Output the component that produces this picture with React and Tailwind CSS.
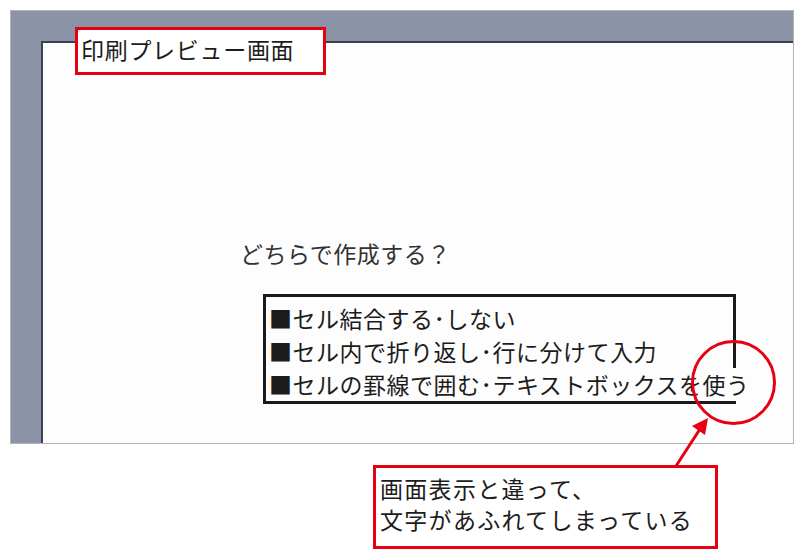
import React from "react";

const JP = { fontFamily: '"Noto Sans CJK JP", "Noto Sans", sans-serif' };

const ROWS = [
  "■セル結合する･しない",
  "■セル内で折り返し･行に分けて入力",
  "■セルの罫線で囲む･テキストボックスを使う",
];

export default function App() {
  return (
    <div style={JP} className="relative w-[800px] h-[556px] bg-white overflow-hidden text-[#1c1c1c]">
      {/* preview frame */}
      <div className="ml-[10px] mt-[10px] w-[784px] h-[434px] bg-[#8b93a7] border border-[#b4b4b4] pt-[30px] pl-[30px]">
        <div className="w-full h-full bg-[#fdfdfd] border-t-2 border-l-2 border-[#3b4150]">
          <div className="pt-[196px] pl-[197px] text-[23px] leading-[28px] tracking-[0.5px] text-[#333]">どちらで作成する？</div>
          <div className="ml-[220px] mt-[27px] w-[473px] h-[110px] border-[3px] border-[#1a1a1a] pt-[5px] pl-[3px]">
            {ROWS.map((r, i) => (
              <div
                key={r}
                className={`text-[23px] leading-[33px] tracking-[0.5px] whitespace-nowrap ${i === 2 ? "relative w-max bg-[#fdfdfd] pr-[2px]" : ""}`}
              >
                {r}
              </div>
            ))}
          </div>
        </div>
      </div>

      {/* callout label, top */}
      <div className="absolute left-[75px] top-[27px] w-[251px] h-[48px] bg-white border-[3px] border-[#e60012] pl-[3px] pt-[4px] text-[23px] leading-[30px] tracking-[0.7px]">
        印刷プレビュー画面
      </div>

      {/* circle on the overflow */}
      <div className="absolute left-[691px] top-[340px] w-[85px] h-[85px] rounded-full border-[3px] border-[#e60012]" />

      {/* arrow */}
      <svg className="absolute left-0 top-0" width="800" height="556" viewBox="0 0 800 556">
        <line x1="676" y1="466" x2="700" y2="429" stroke="#e60012" strokeWidth="3" />
        <polygon points="708,418 692,426 705,435" fill="#e60012" />
      </svg>

      {/* callout label, bottom */}
      <div className="ml-[373px] mt-[21px] w-[345px] h-[84px] border-[3px] border-[#e60012] pl-[4px] pt-[5px] text-[23px] leading-[31px] tracking-[1.3px]">
        <div>画面表示と違って、</div>
        <div>文字があふれてしまっている</div>
      </div>
    </div>
  );
}
